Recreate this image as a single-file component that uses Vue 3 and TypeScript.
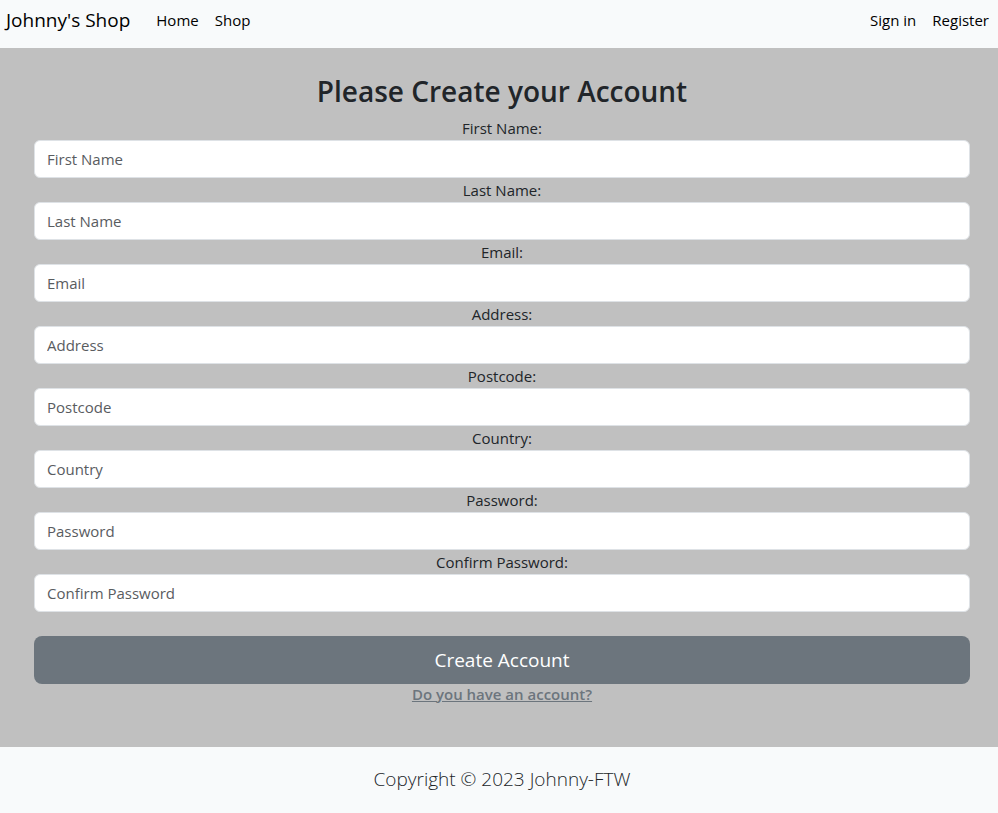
<script setup lang="ts">
import { reactive } from 'vue'

interface Field {
  id: string
  label: string
  type: 'text' | 'email' | 'password'
}

const fields: Field[] = [
  { id: 'firstName', label: 'First Name', type: 'text' },
  { id: 'lastName', label: 'Last Name', type: 'text' },
  { id: 'email', label: 'Email', type: 'email' },
  { id: 'address', label: 'Address', type: 'text' },
  { id: 'postcode', label: 'Postcode', type: 'text' },
  { id: 'country', label: 'Country', type: 'text' },
  { id: 'password', label: 'Password', type: 'password' },
  { id: 'confirmPassword', label: 'Confirm Password', type: 'password' },
]

const form = reactive<Record<string, string>>({})
</script>

<template>
  <div class="page">
    <header class="navbar">
      <a class="brand" href="#">Johnny's Shop</a>
      <nav class="links">
        <a href="#">Home</a>
        <a href="#">Shop</a>
      </nav>
      <nav class="links account">
        <a href="#">Sign in</a>
        <a href="#">Register</a>
      </nav>
    </header>

    <main class="content">
      <h1>Please Create your Account</h1>
      <form @submit.prevent>
        <div v-for="field in fields" :key="field.id" class="field">
          <label :for="field.id">{{ field.label }}:</label>
          <input :id="field.id" v-model="form[field.id]" :type="field.type" :placeholder="field.label" />
        </div>
        <button type="submit">Create Account</button>
      </form>
      <a class="signin" href="#">Do you have an account?</a>
    </main>

    <footer class="footer">Copyright © 2023 Johnny-FTW</footer>
  </div>
</template>

<style>
body {
  margin: 0;
  background: #f8fafb;
}
</style>

<style scoped>
.page {
  min-height: 100vh;
  display: flex;
  flex-direction: column;
  font-family: "Segoe UI", "Open Sans", "Noto Sans", sans-serif;
  font-size: 15px;
  line-height: 24px;
  color: #212529;
}

.navbar {
  display: flex;
  align-items: center;
  height: 48px;
  padding: 0 9px 8px 6px;
  box-sizing: border-box;
  background: #f8fafb;
}

.navbar a {
  color: #000;
  text-decoration: none;
}

.navbar .brand {
  margin-right: 26px;
  font-size: 19px;
}

.links {
  display: flex;
  gap: 16px;
}

.account {
  margin-left: auto;
}

.content {
  flex: 1;
  display: flex;
  flex-direction: column;
  align-items: center;
  padding: 24px 28px 40px 34px;
  background: #c0c0c0;
}

h1 {
  margin: 0 0 6px;
  font-size: 28px;
  font-weight: 600;
  line-height: 38px;
}

form {
  width: 100%;
}

.field {
  display: flex;
  flex-direction: column;
  align-items: center;
}

.field input {
  width: 100%;
  height: 38px;
  box-sizing: border-box;
  padding: 6px 12px;
  border: 1px solid #dee2e6;
  border-radius: 6px;
  background: #fff;
  color: #212529;
  font: inherit;
}

.field input::placeholder {
  color: #595c5f;
  opacity: 1;
}

button {
  display: block;
  width: 100%;
  height: 48px;
  margin-top: 24px;
  border: 0;
  border-radius: 8px;
  background: #6c757d;
  color: #fff;
  font-family: inherit;
  font-size: 19px;
  cursor: pointer;
}

.signin {
  color: #6c757d;
  font-weight: 600;
  line-height: 20px;
}

.footer {
  padding: 17px 0 19px 6px;
  background: #f8fafb;
  font-size: 19px;
  font-weight: 300;
  line-height: 30px;
  text-align: center;
}
</style>
